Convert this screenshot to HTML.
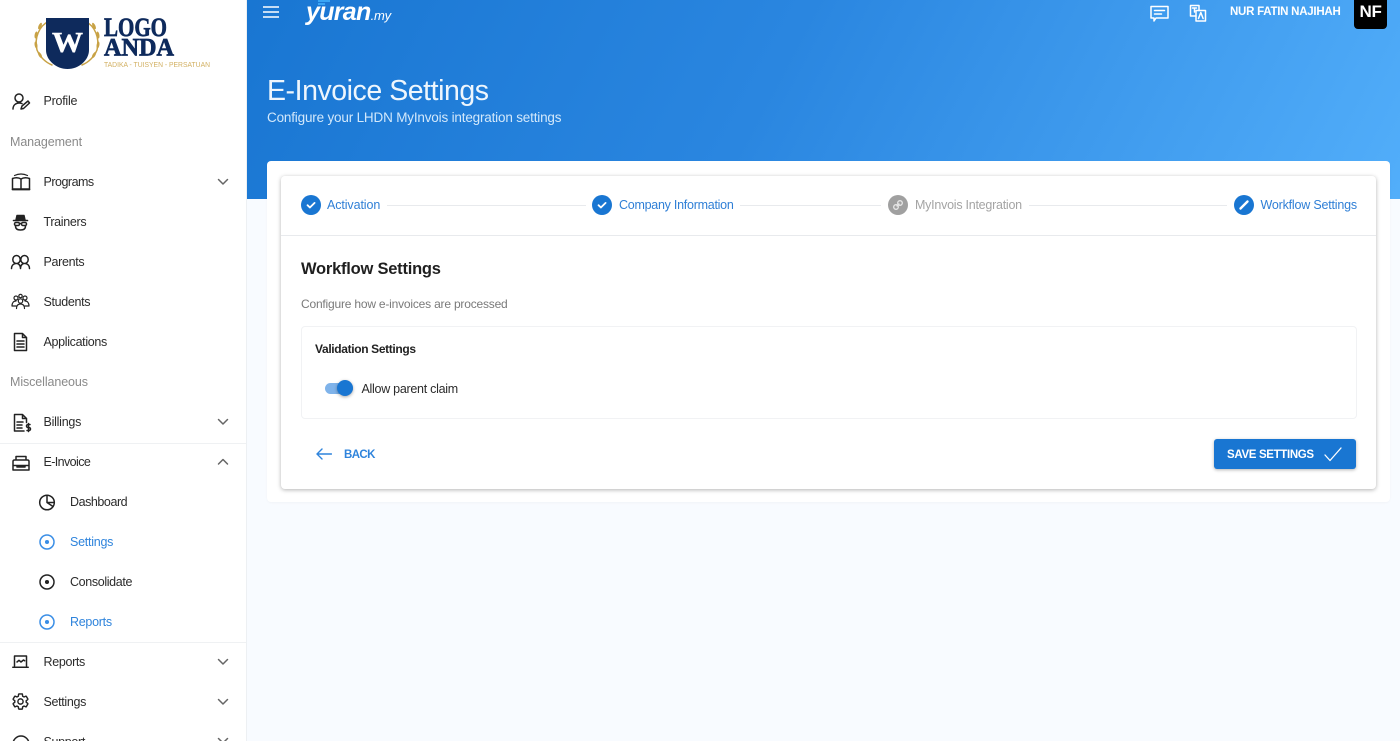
<!DOCTYPE html>
<html><head><meta charset="utf-8"><title>E-Invoice Settings</title>
<style>
*{box-sizing:border-box}
html,body{margin:0;padding:0;width:1400px;height:741px;overflow:hidden;background:#f8fbff;font-family:"Liberation Sans",sans-serif;color:#222}
#root{position:relative;width:1400px;height:741px;overflow:hidden}
.t{position:absolute;white-space:nowrap;line-height:18px;font-size:12.5px;color:#2b2b2b;letter-spacing:-.33px}
.abs{position:absolute}
#side{position:absolute;left:0;top:0;width:247px;height:741px;background:#fff;border-right:1px solid #edf0f3;overflow:hidden}
#hdr{position:absolute;left:247px;top:0;width:1153px;height:199px;background:linear-gradient(118deg,#1976d2 0%,#2a86e0 45%,#52aefa 100%)}
svg.i{position:absolute;fill:none;stroke:#222;stroke-width:1.5;stroke-linecap:round;stroke-linejoin:round}
.blue{color:#2f84dc}
.hdiv{position:absolute;height:1px;background:#e8eaed}
.step{position:absolute;top:195px;width:20px;height:20px;border-radius:50%;background:#1976d2}
</style></head><body><div id="root">
<div id="side">
<svg class="abs" style="left:30px;top:12px" width="186" height="62" viewBox="0 0 186 62">
<g fill="none" stroke="#c8a245" stroke-width="1.500" stroke-linecap="round"><path d="M19 9C9 14 4 26 7 38 10 45 15 50 22 53"/><path d="M55 9C65 14 70 26 67 38 64 45 59 50 52 53"/></g>
<g fill="#c8a245"><ellipse cx="10" cy="14" rx="1.400" ry="3.500" transform="rotate(25 10 14)"/><ellipse cx="6" cy="23" rx="1.400" ry="3.500" transform="rotate(10 6 23)"/><ellipse cx="6" cy="33" rx="1.400" ry="3.500" transform="rotate(-10 6 33)"/><ellipse cx="10" cy="43" rx="1.400" ry="3.500" transform="rotate(-30 10 43)"/><ellipse cx="64" cy="14" rx="1.400" ry="3.500" transform="rotate(-25 64 14)"/><ellipse cx="68" cy="23" rx="1.400" ry="3.500" transform="rotate(-10 68 23)"/><ellipse cx="68" cy="33" rx="1.400" ry="3.500" transform="rotate(10 68 33)"/><ellipse cx="64" cy="43" rx="1.400" ry="3.500" transform="rotate(30 64 43)"/></g>
<path d="M16 6H59V38C59 48 49 57 37.500 57 26 57 16 48 16 38Z" fill="#0e2a5c"/>
<text x="22" y="40" font-family="Liberation Serif" font-weight="700" font-size="29" fill="#fff" textLength="31" lengthAdjust="spacingAndGlyphs" stroke="#fff" stroke-width=".5">W</text>
<text x="74" y="24" font-family="Liberation Serif" font-weight="700" font-size="26" fill="#0e2a5c" textLength="63" lengthAdjust="spacingAndGlyphs" stroke="#0e2a5c" stroke-width=".7">LOGO</text>
<text x="74" y="43.500" font-family="Liberation Serif" font-weight="700" font-size="25" fill="#0e2a5c" textLength="70" lengthAdjust="spacingAndGlyphs" stroke="#0e2a5c" stroke-width=".7">ANDA</text>
<text x="74" y="55" font-family="Liberation Sans" font-size="7.500" fill="#d2b062" textLength="106" lengthAdjust="spacingAndGlyphs">TADIKA - TUISYEN - PERSATUAN</text>
</svg>

<svg class="i" style="left:11px;top:92px" width="20" height="20" viewBox="0 0 20 20"><circle cx="8" cy="6" r="4"/><path d="M2 17c0-4 3-6 6-6 1 0 2 .2 3 .6"/><path d="M10 17l1-3 6-5 1.500 2-6 5.500z"/></svg>
<span class="t" style="left:43.500px;top:92px;letter-spacing:-.25px">Profile</span>
<span class="t" style="left:10px;top:133px;color:#8a8a8a;letter-spacing:-.1px">Management</span>

<svg class="i" style="left:11px;top:173px" width="20" height="18" viewBox="0 0 20 18"><path d="M3.500 2.500Q10 -.5 16.500 2.500" stroke-width="1.200"/><path d="M1.500 5.500C4.500 4.500 7.500 4.500 10 6c2.500-1.500 5.500-1.500 8.500-.5V16H1.500zM10 6v10"/><path d="M1.500 16.500h17" stroke-width="1.800"/></svg>
<span class="t" style="left:43.500px;top:173px;letter-spacing:-.5px">Programs</span>
<svg class="i" style="left:217px;top:178px;stroke:#666" width="12" height="8" viewBox="0 0 12 8"><path d="M1.500 1.500l4.500 4.500 4.500-4.500"/></svg>

<svg class="i" style="left:12px;top:214px" width="17" height="17" viewBox="0 0 17 17"><path d="M4 6L5 1.500h7L13 6z" fill="#222"/><path d="M1.500 6.500h14" stroke-width="1.600"/><rect x="2.500" y="8.500" width="5" height="3" rx="1.400"/><rect x="9.500" y="8.500" width="5" height="3" rx="1.400"/><path d="M7.500 9.500h2M3.500 12c0 3 2 4 5 4s5-1 5-4"/></svg>
<span class="t" style="left:43.500px;top:213px">Trainers</span>

<svg class="i" style="left:10px;top:254px" width="21" height="16" viewBox="0 0 21 16"><ellipse cx="6.500" cy="5.500" rx="3.700" ry="4"/><ellipse cx="14.500" cy="5.500" rx="3.700" ry="4"/><path d="M1.500 14.500c0-2.500 1.500-4.500 4-5M19.500 14.500c0-2.500-1.500-4.500-4-5M7.500 9.500c2 .8 3 2.500 3 5 0-2.500 1-4.200 3-5"/></svg>
<span class="t" style="left:43.500px;top:253px">Parents</span>

<svg class="i" style="left:11px;top:293px;stroke-width:1.200" width="19" height="17" viewBox="0 0 19 17"><circle cx="9.500" cy="3" r="1.700"/><circle cx="5" cy="5" r="2"/><circle cx="14" cy="5" r="2"/><circle cx="9.500" cy="8" r="2.200"/><path d="M1 13c0-3 1.500-5 4-5M18 13c0-3-1.500-5-4-5M5.500 15.500c0-3 1.500-4.500 4-4.500s4 1.500 4 4.500M1 13h4M14 13h4"/></svg>
<span class="t" style="left:43.500px;top:293px">Students</span>

<svg class="i" style="left:13px;top:332px" width="15" height="20" viewBox="0 0 15 20"><path d="M1.500 1.500h8l4 4v13h-12zM9.500 1.500v4h4M4 9h7M4 12h7M4 15h7"/></svg>
<span class="t" style="left:43.500px;top:333px">Applications</span>
<span class="t" style="left:10px;top:373px;color:#8a8a8a;letter-spacing:-.1px">Miscellaneous</span>

<svg class="i" style="left:13px;top:413px" width="19" height="20" viewBox="0 0 19 20"><path d="M11 18H1.500V1.500h8l4 4v4M9.500 1.500v4h4M4 9h6M4 12h5M4 15h5"/><path d="M17 11.500h-2a1.300 1.300 0 0 0 0 3h1a1.300 1.300 0 0 1 0 3h-2M15.500 10.500v8"/></svg>
<span class="t" style="left:43.500px;top:413px;letter-spacing:-.25px">Billings</span>
<svg class="i" style="left:217px;top:418px;stroke:#666" width="12" height="8" viewBox="0 0 12 8"><path d="M1.500 1.500l4.500 4.500 4.500-4.500"/></svg>
<div class="hdiv" style="left:0;top:443px;width:246px;background:#eff1f3"></div>

<svg class="i" style="left:11px;top:454px" width="20" height="18" viewBox="0 0 20 18"><path d="M5 6V2.500h10V6M2 7.500C2 6.500 2.500 6 3.500 6h13c1 0 1.500.5 1.500 1.500V16H2zM2 11.500h16M6 11.500V13h8v-1.500"/></svg>
<span class="t" style="left:43.500px;top:453px;letter-spacing:-.6px">E-Invoice</span>
<svg class="i" style="left:217px;top:458px;stroke:#666" width="12" height="8" viewBox="0 0 12 8"><path d="M1.500 6l4.500-4.500 4.500 4.500"/></svg>

<svg class="i" style="left:38px;top:493px" width="18" height="18" viewBox="0 0 18 18"><circle cx="9" cy="9.500" r="7.300"/><path d="M9 2.200V9.500l6 4M9 9.500h7.300"/></svg>
<span class="t" style="left:70px;top:493px;letter-spacing:-.44px">Dashboard</span>

<svg class="i" style="left:38px;top:533px;stroke:#3a8ee6" width="18" height="18" viewBox="0 0 18 18"><circle cx="9" cy="9" r="7"/><circle cx="9" cy="9" r="1.300" fill="#3a8ee6"/></svg>
<span class="t blue" style="left:70px;top:533px;letter-spacing:-.25px">Settings</span>

<svg class="i" style="left:38px;top:573px" width="18" height="18" viewBox="0 0 18 18"><circle cx="9" cy="9" r="7"/><circle cx="9" cy="9" r="1.300" fill="#222"/></svg>
<span class="t" style="left:70px;top:573px;letter-spacing:-.36px">Consolidate</span>

<svg class="i" style="left:38px;top:613px;stroke:#3a8ee6" width="18" height="18" viewBox="0 0 18 18"><circle cx="9" cy="9" r="7"/><circle cx="9" cy="9" r="1.300" fill="#3a8ee6"/></svg>
<span class="t blue" style="left:70px;top:613px;letter-spacing:-.28px">Reports</span>
<div class="hdiv" style="left:0;top:642px;width:246px;background:#eff1f3"></div>

<svg class="i" style="left:12px;top:654px" width="17" height="15" viewBox="0 0 17 15"><path d="M2.500 12V2h12v10M.8 13.300h15.400"/><path d="M5 8l2-1.700 2 1.700 2.500-2 1.200.8"/></svg>
<span class="t" style="left:43.500px;top:653px">Reports</span>
<svg class="i" style="left:217px;top:658px;stroke:#666" width="12" height="8" viewBox="0 0 12 8"><path d="M1.500 1.500l4.500 4.500 4.500-4.500"/></svg>

<svg class="i" style="left:11px;top:692px;stroke-width:1.800" width="19" height="19" viewBox="0 0 24 24"><circle cx="12" cy="12" r="3.300"/><path d="M19.140 12.940c.04-.3.06-.61.06-.94 0-.32-.02-.64-.07-.94l2.030-1.580a.49.49 0 0 0 .12-.61l-1.920-3.320a.488.488 0 0 0-.59-.22l-2.390.96c-.5-.38-1.030-.7-1.620-.94l-.36-2.540a.484.484 0 0 0-.48-.41h-3.840c-.24 0-.43.17-.47.41l-.36 2.540c-.59.24-1.130.57-1.620.94l-2.390-.96c-.22-.08-.47 0-.59.22L2.740 8.870c-.12.21-.08.47.12.61l2.030 1.580c-.05.3-.09.63-.09.94s.02.64.07.94l-2.030 1.580a.49.49 0 0 0-.12.61l1.920 3.320c.12.22.37.29.59.22l2.390-.96c.5.38 1.030.7 1.620.94l.36 2.540c.05.24.24.41.48.41h3.840c.24 0 .44-.17.47-.41l.36-2.540c.59-.24 1.130-.56 1.620-.94l2.390.96c.22.08.47 0 .59-.22l1.920-3.320c.12-.22.07-.47-.12-.61l-2.010-1.580z"/></svg>
<span class="t" style="left:43.500px;top:693px">Settings</span>
<svg class="i" style="left:217px;top:698px;stroke:#666" width="12" height="8" viewBox="0 0 12 8"><path d="M1.500 1.500l4.500 4.500 4.500-4.500"/></svg>

<svg class="i" style="left:12px;top:735px" width="18" height="18" viewBox="0 0 18 18"><circle cx="9" cy="9" r="8"/></svg>
<span class="t" style="left:43.500px;top:733px">Support</span>
<svg class="i" style="left:217px;top:737px;stroke:#666" width="12" height="8" viewBox="0 0 12 8"><path d="M1.500 1.500l4.500 4.500 4.500-4.500"/></svg>
</div>

<div id="hdr"></div>
<svg class="i" style="left:263px;top:6px;stroke:#fff;stroke-width:1.600;stroke-linecap:butt" width="16" height="12" viewBox="0 0 16 12"><path d="M0 1h16M0 6h16M0 11h16"/></svg>
<span class="abs" style="left:306px;top:-2px;font:italic 700 25px/28px 'Liberation Sans',sans-serif;color:#fff;letter-spacing:-.7px;white-space:nowrap">yuran<span style="font-size:13px;letter-spacing:-.2px;font-weight:400">.my</span></span>
<svg class="abs" style="left:317px;top:0" width="16" height="6"><rect x="1" y="0" width="12" height="2" fill="#39a5f5"/><rect x="1" y="3" width="7" height="2" fill="#39a5f5"/></svg>

<svg class="i" style="left:1150px;top:5px;stroke:#fff" width="19" height="18" viewBox="0 0 19 18"><path d="M1 1.500h17V13H6l-2 3v-3H1z"/><path d="M4.500 5.500h10M4.500 9h7"/></svg>
<svg class="i" style="left:1189px;top:4px;stroke:#fff" width="18" height="18" viewBox="0 0 18 18"><path d="M7 12H1.500V1.500H10v5"/><path d="M7 6.500h9.500V17H7z"/><path d="M9.500 14.500l2.300-6 2.300 6M3.500 4h4M5.500 4v4"/></svg>
<span class="t" style="left:1230px;top:3px;color:#fff;font-weight:700;font-size:11.500px;letter-spacing:-.25px">NUR FATIN NAJIHAH</span>
<div class="abs" style="left:1354px;top:-4px;width:33px;height:33px;background:#000;border-radius:4px;color:#fff;font:700 17px/31px 'Liberation Sans',sans-serif;text-align:center;letter-spacing:-.3px">NF</div>

<span class="abs" style="left:267px;top:74px;font-size:28.500px;letter-spacing:-.45px;line-height:34px;color:#eef6fd;white-space:nowrap">E-Invoice Settings</span>
<span class="abs" style="left:267px;top:109px;font-size:13.500px;letter-spacing:-.18px;line-height:18px;color:#d2e8fb;white-space:nowrap">Configure your LHDN MyInvois integration settings</span>

<div class="abs" style="left:267px;top:161px;width:1123px;height:341px;background:#fff;border-radius:4px;box-shadow:0 1px 2px rgba(0,0,0,.03)"></div>
<div class="abs" style="left:281px;top:176px;width:1095px;height:313px;background:#fff;border-radius:4px;box-shadow:0 1px 4px rgba(0,0,0,.3)"></div>
<div class="hdiv" style="left:281px;top:235px;width:1095px"></div>

<div class="step" style="left:301px"></div>
<svg class="i" style="left:301px;top:195px;stroke:#fff;stroke-width:1.800" width="20" height="20" viewBox="0 0 20 20"><path d="M6.500 10.200l2.400 2.300 4.700-4.600"/></svg>
<span class="t" style="left:327px;top:195.500px;color:#2f7fd6;letter-spacing:-.1px">Activation</span>
<div class="hdiv" style="left:387px;top:205px;width:199px"></div>
<div class="step" style="left:592px"></div>
<svg class="i" style="left:592px;top:195px;stroke:#fff;stroke-width:1.800" width="20" height="20" viewBox="0 0 20 20"><path d="M6.500 10.200l2.400 2.300 4.700-4.600"/></svg>
<span class="t" style="left:619px;top:195.500px;color:#2f7fd6;letter-spacing:-.26px">Company Information</span>
<div class="hdiv" style="left:740px;top:205px;width:141px"></div>
<div class="step" style="left:888px;background:#a0a0a0"></div>
<svg class="i" style="left:888px;top:195px;stroke:#e8e8e8;stroke-width:1.300" width="20" height="20" viewBox="0 0 20 20"><circle cx="8" cy="12" r="2.300"/><circle cx="12" cy="8" r="2.300"/><path d="M9 11l2-2"/></svg>
<span class="t" style="left:915px;top:195.500px;color:#a4a4a4;letter-spacing:-.25px">MyInvois Integration</span>
<div class="hdiv" style="left:1029px;top:205px;width:198px"></div>
<div class="step" style="left:1234px"></div>
<svg class="i" style="left:1234px;top:195px;stroke:#fff;stroke-width:2.400" width="20" height="20" viewBox="0 0 20 20"><path d="M6.500 13.500l7-7"/></svg>
<span class="t" style="left:1260.500px;top:195.500px;color:#2f7fd6;letter-spacing:-.2px">Workflow Settings</span>

<span class="abs" style="left:301px;top:259px;font-size:16.500px;letter-spacing:-.23px;line-height:20px;font-weight:700;color:#1f1f1f;white-space:nowrap">Workflow Settings</span>
<span class="t" style="left:301px;top:295px;color:#7a7a7a;font-size:12px;letter-spacing:-.2px">Configure how e-invoices are processed</span>

<div class="abs" style="left:301px;top:326px;width:1056px;height:93px;border:1px solid #f1f2f4;border-radius:4px"></div>
<span class="t" style="left:315px;top:340px;font-weight:700;color:#222;font-size:12px;letter-spacing:-.35px">Validation Settings</span>
<div class="abs" style="left:325px;top:383px;width:28px;height:11px;border-radius:6px;background:#7fb3ea"></div>
<div class="abs" style="left:337px;top:380px;width:16px;height:16px;border-radius:50%;background:#1976d2;box-shadow:0 1px 3px rgba(0,0,0,.35)"></div>
<span class="t" style="left:361.500px;top:380px;letter-spacing:-.28px">Allow parent claim</span>

<svg class="i" style="left:316px;top:448px;stroke:#2f84dc;stroke-width:1.400" width="16" height="12" viewBox="0 0 16 12"><path d="M15.500 6H1M6 1L1 6l5 5"/></svg>
<span class="t" style="left:344px;top:446px;color:#2f84dc;font-weight:700;font-size:11.500px;letter-spacing:-.6px">BACK</span>

<div class="abs" style="left:1214px;top:439px;width:142px;height:30px;background:#1976d2;border-radius:3px;box-shadow:0 1px 3px rgba(0,0,0,.3)"></div>
<span class="t" style="left:1227px;top:446px;color:#fff;font-weight:700;font-size:11.500px;letter-spacing:-.34px">SAVE SETTINGS</span>
<svg class="i" style="left:1324px;top:447px;stroke:#fff;stroke-width:1.300" width="18" height="15" viewBox="0 0 18 15"><path d="M1 8l5 5.500L17 1"/></svg>
</div></body></html>
